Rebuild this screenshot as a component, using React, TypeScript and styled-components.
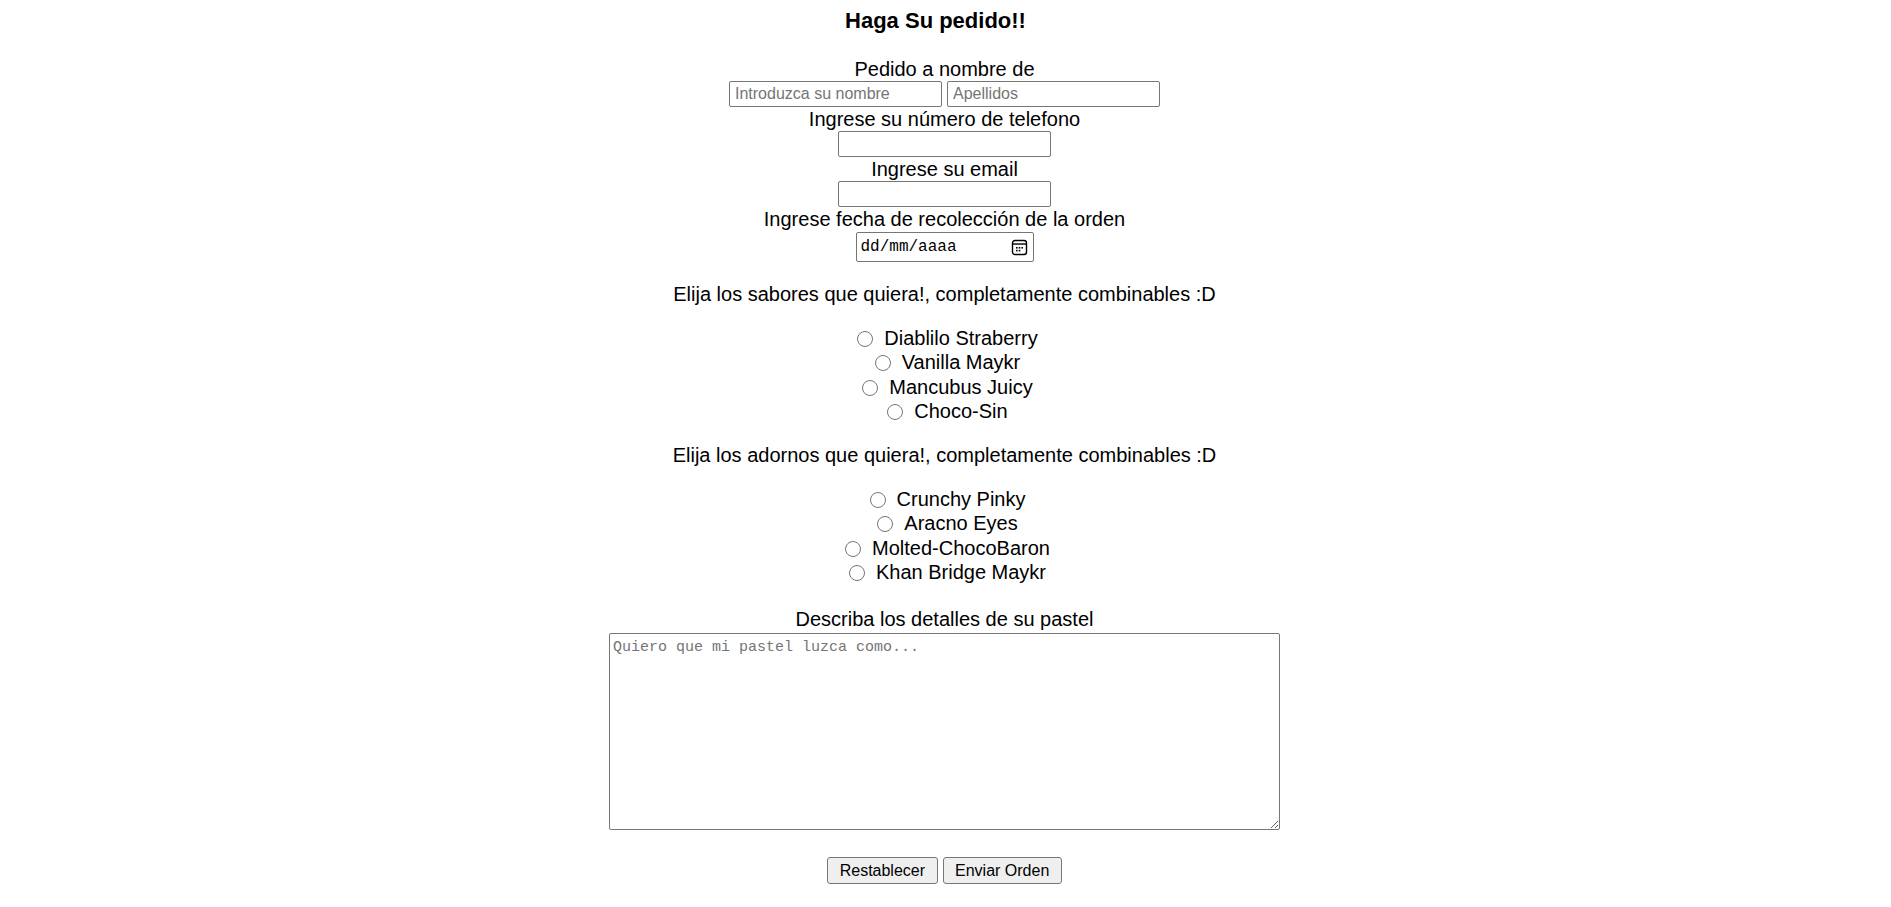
import React from "react";
import styled, { createGlobalStyle } from "styled-components";

const GlobalStyle = createGlobalStyle`
  body {
    margin: 0;
    background: #ffffff;
    color: #000000;
    font-family: "Liberation Sans", Arial, sans-serif;
  }
`;

const OrderForm = styled.form`
  display: flex;
  flex-direction: column;
  align-items: center;
  padding: 8px 2px 0 0;
  font-size: 20px;
  line-height: 23px;
`;

const Title = styled.h3`
  margin: 0 0 25px;
  padding-right: 18px;
  font-size: 22px;
  line-height: 25px;
  font-weight: bold;
`;

const FieldLabel = styled.label`
  display: block;
  height: 23px;
  white-space: nowrap;
`;

const InputRow = styled.div`
  display: flex;
  gap: 5px;
  height: 27px;
`;

const TextInput = styled.input`
  box-sizing: border-box;
  width: 213px;
  height: 26px;
  margin: 0;
  padding: 1px 5px;
  border: 1px solid #767676;
  border-radius: 2px;
  font-family: "Liberation Sans", Arial, sans-serif;
  font-size: 16px;
  color: #000;

  &::placeholder {
    color: #757575;
  }
`;

const DateRow = styled.div`
  padding: 1px 0 1px;
`;

const DateField = styled.div`
  box-sizing: border-box;
  width: 178px;
  height: 30px;
  display: flex;
  align-items: center;
  justify-content: space-between;
  padding: 0 5px 0 4px;
  border: 1px solid #767676;
  border-radius: 2px;
  font-family: "Liberation Mono", "DejaVu Sans Mono", monospace;
  font-size: 16px;
  cursor: text;
`;

const DateText = styled.span`
  line-height: 20px;
`;

const SectionText = styled.p`
  margin: 20px 0;
  white-space: nowrap;
`;

const RadioList = styled.div`
  display: flex;
  flex-direction: column;
  align-items: center;
`;

const RadioRow = styled.div`
  display: flex;
  align-items: center;
  height: 24.5px;
`;

const Radio = styled.input`
  width: 16px;
  height: 16px;
  margin: 1px 6px 0 6px;
`;

const RadioLabel = styled.label`
  margin-left: 5px;
  white-space: nowrap;
`;

const DetailsLabel = styled(FieldLabel)`
  margin-top: 23px;
`;

const Details = styled.textarea`
  box-sizing: border-box;
  width: 671px;
  height: 197px;
  margin: 2px 0 0;
  padding: 5px 3px;
  border: 1px solid #767676;
  border-radius: 2px;
  font-family: "Liberation Mono", "DejaVu Sans Mono", monospace;
  font-size: 15px;
  line-height: 18px;
  resize: both;

  &::placeholder {
    color: #757575;
  }
`;

const ButtonRow = styled.div`
  display: flex;
  gap: 5px;
  margin-top: 27px;
`;

const FormButton = styled.button`
  height: 27px;
  padding: 0 11.5px;
  background: #efefef;
  border: 1px solid #767676;
  border-radius: 3px;
  color: #000;
  font-family: "Liberation Sans", Arial, sans-serif;
  font-size: 16px;
  cursor: pointer;

  &:hover {
    background: #e5e5e5;
  }
`;

const CalendarIcon = () => (
  <svg width="17" height="17" viewBox="0 0 17 17" fill="none">
    <rect x="1.5" y="1.5" width="14" height="14" rx="2.5" stroke="#000" strokeWidth="1.4" />
    <line x1="1.5" y1="5" x2="15.5" y2="5" stroke="#000" strokeWidth="1.4" />
    <rect x="5" y="8" width="1.6" height="1.6" fill="#000" />
    <rect x="7.7" y="8" width="1.6" height="1.6" fill="#000" />
    <rect x="10.4" y="8" width="1.6" height="1.6" fill="#000" />
    <rect x="5" y="10.8" width="1.6" height="1.6" fill="#000" />
    <rect x="7.7" y="10.8" width="1.6" height="1.6" fill="#000" />
  </svg>
);

const sabores = ["Diablilo Straberry", "Vanilla Maykr", "Mancubus Juicy", "Choco-Sin"];
const adornos = ["Crunchy Pinky", "Aracno Eyes", "Molted-ChocoBaron", "Khan Bridge Maykr"];

const App: React.FC = () => {
  return (
    <>
      <GlobalStyle />
      <OrderForm onSubmit={(e) => e.preventDefault()}>
        <Title>Haga Su pedido!!</Title>

        <FieldLabel htmlFor="nombre">Pedido a nombre de</FieldLabel>
        <InputRow>
          <TextInput id="nombre" type="text" placeholder="Introduzca su nombre" />
          <TextInput id="apellidos" type="text" placeholder="Apellidos" />
        </InputRow>

        <FieldLabel htmlFor="telefono">Ingrese su número de telefono</FieldLabel>
        <InputRow>
          <TextInput id="telefono" type="tel" />
        </InputRow>

        <FieldLabel htmlFor="email">Ingrese su email</FieldLabel>
        <InputRow>
          <TextInput id="email" type="email" />
        </InputRow>

        <FieldLabel>Ingrese fecha de recolección de la orden</FieldLabel>
        <DateRow>
          <DateField>
            <DateText>dd/mm/aaaa</DateText>
            <CalendarIcon />
          </DateField>
        </DateRow>

        <SectionText>Elija los sabores que quiera!, completamente combinables :D</SectionText>
        <RadioList>
          {sabores.map((s, i) => (
            <RadioRow key={s}>
              <Radio type="radio" id={`sabor-${i}`} name={`sabor-${i}`} />
              <RadioLabel htmlFor={`sabor-${i}`}>{s}</RadioLabel>
            </RadioRow>
          ))}
        </RadioList>

        <SectionText>Elija los adornos que quiera!, completamente combinables :D</SectionText>
        <RadioList>
          {adornos.map((a, i) => (
            <RadioRow key={a}>
              <Radio type="radio" id={`adorno-${i}`} name={`adorno-${i}`} />
              <RadioLabel htmlFor={`adorno-${i}`}>{a}</RadioLabel>
            </RadioRow>
          ))}
        </RadioList>

        <DetailsLabel htmlFor="detalles">Describa los detalles de su pastel</DetailsLabel>
        <Details id="detalles" placeholder="Quiero que mi pastel luzca como..." />

        <ButtonRow>
          <FormButton type="reset">Restablecer</FormButton>
          <FormButton type="submit">Enviar Orden</FormButton>
        </ButtonRow>
      </OrderForm>
    </>
  );
};

export default App;
